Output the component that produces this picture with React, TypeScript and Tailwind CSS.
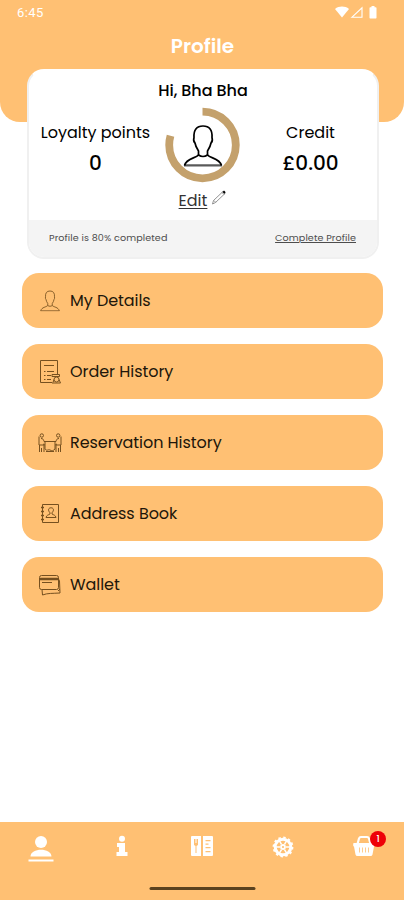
import React from 'react';

const PersonOutline = ({ className, strokeWidth = 2 }: { className?: string; strokeWidth?: number }) => (
    <svg viewBox="0 0 40 44" className={className} fill="none" stroke="currentColor" strokeWidth={strokeWidth} strokeLinejoin="round">
        <path d="M15.500 31v-4c-2-3-3-5-3.500-8-1.200-1-1.600-3.500-1-5.500C10.500 6 13.500 2 20 2s9.500 4 9 11.500c.6 2 .2 4.500-1 5.500-.5 3-1.500 5-3.500 8v4" />
        <path d="M15.500 31c-3 3.500-12 3-14 10.500M24.500 31c3 3.500 12 3 14 10.500M15.500 31c3 2 6 2 9 0" />
        <path d="M1 41.300h38" strokeWidth={strokeWidth * 1.3} strokeOpacity=".65" />
    </svg>
);

const OrderIcon = () => (
    <svg viewBox="0 0 24 26" className="h-[26px] w-6" fill="none" stroke="currentColor" strokeWidth="1">
        <path d="M14 23.500H2.500v-22h17V15" />
        <path d="M6 6.500h10M6 12.500h1.500M9 12.500h7M6 16.500h1.500M9 16.500h4M6 20.500h1.500M9 20.500h4" />
        <path d="M14 15.500h7.500v2H14zM15 23.500l1-3M14 24h8.500M21 20.500l1.500 3.500" />
        <circle cx="18.5" cy="20.500" r="2.500" />
    </svg>
);

const ReservationIcon = () => (
    <svg viewBox="0 0 24 22" className="h-[22px] w-6" fill="none" stroke="currentColor" strokeWidth="1">
        <circle cx="3.800" cy="3.500" r="1.700" />
        <circle cx="20.200" cy="3.500" r="1.700" />
        <path d="M1 4.500v8.500h5v7M1.500 13v7M3.500 20v-4M3 6.500c2 0 2.500 1 3 3h2M5 12l2 1M23 4.500v8.500h-5v7M22.500 13v7M20.500 20v-4M21 6.500c-2 0-2.500 1-3 3h-2M19 12l-2 1" />
        <path d="M7 9.500h10M7 9.500v7.500M17 9.500v7.500M7 17c2 2.500 3 0 5 1s3 1 5-1M8 19.500h8" />
    </svg>
);

const AddressIcon = () => (
    <svg viewBox="0 0 22 22" className="h-[22px] w-[22px]" fill="none" stroke="currentColor" strokeWidth="1">
        <path d="M3.500 1.500h16v18h-16z" />
        <path d="M2 4.500h3M2 8.500h3M2 12.500h3M2 16.500h3" strokeWidth="1.500" />
        <path d="M11 11V9.800C8.500 7 9.500 4.800 12 4.800s3.500 2.200 1 5V11c1.500 1 3.500 1 4 3.500H7c.5-2.500 2.500-2.500 4-3.500Z" />
    </svg>
);

const WalletIcon = () => (
    <svg viewBox="0 0 24 22" className="h-[22px] w-6" fill="none" stroke="currentColor" strokeWidth="1">
        <rect x="1.500" y="1.500" width="19" height="14" rx="2" />
        <path d="M2 5h18.500" strokeWidth="2.500" />
        <path d="M4 8.500h10M4 15.500l.5 5.500c5-2 10-1.500 17.500-2l-.5-12-1-2M20 17l2-2" />
    </svg>
);

const StatusBar = () => (
    <div className="flex h-6 items-center justify-between pl-[17px] pr-[26px] pt-0.5 text-white">
        <span className="font-['Roboto',sans-serif] text-[13px] tracking-[0.4px]">6:45</span>
        <svg viewBox="0 0 43 14" className="h-3.5 w-[43px]" fill="currentColor">
            <path d="M0 3C4-.2 10-.2 14 3L7 11.500Z" />
            <path d="M16.800 11.300 27 1.800v9.500Z" fill="none" stroke="currentColor" strokeWidth="1.100" />
            <path d="M36.500 0h3v1.200h1.200c.6 0 .8.300.8.800v9.500c0 .7-.3 1-1 1h-5c-.7 0-1-.3-1-1V2c0-.5.3-.8.800-.8h1.200Z" />
        </svg>
    </div>
);

const menuItems = [
    { label: 'My Details', icon: <PersonOutline className="h-[22px] w-5" strokeWidth={1.7} /> },
    { label: 'Order History', icon: <OrderIcon /> },
    { label: 'Reservation History', icon: <ReservationIcon /> },
    { label: 'Address Book', icon: <AddressIcon /> },
    { label: 'Wallet', icon: <WalletIcon /> },
];

function ProfileCard() {
    return (
        <section className="-mt-[53px] ml-[27px] flex h-[190px] w-[352px] flex-col overflow-hidden rounded-[17px] border-2 border-[#f0f0f0] border-t-white bg-white">
            <div className="grid h-[149px] grid-cols-[133px_minmax(0,1fr)_133px]">
                <div className="flex flex-col items-center pt-[52px]">
                    <span className="text-base leading-5 whitespace-nowrap">Loyalty points</span>
                    <span className="mt-2.5 text-xl leading-5 font-medium">0</span>
                </div>
                <div className="flex flex-col items-center pt-[10px]">
                    <span className="text-base leading-5 font-medium tracking-[-0.05px] whitespace-nowrap">Hi, Bha Bha</span>
                    <div className="mt-[6px] grid h-[76px] w-[76px] place-items-center">
                        <svg viewBox="0 0 76 76" className="col-start-1 row-start-1 h-[76px] w-[76px]" fill="none">
                            <circle cx="37.500" cy="38" r="33.300" stroke="#c4a16c" strokeWidth="7.800" pathLength="100" strokeDasharray="79.500 20.500" transform="rotate(-90 37.500 38)" />
                        </svg>
                        <PersonOutline className="col-start-1 row-start-1 mt-0.5 h-11 w-10" strokeWidth={1.7} />
                    </div>
                    <a className="mt-[8px] flex items-center gap-1 text-base leading-5 text-[#333]">
                        <span className="underline underline-offset-2">Edit</span>
                        <svg viewBox="0 0 16 16" className="-mt-1.5 h-4 w-4" fill="none" stroke="#777" strokeWidth=".8">
                            <path d="m1.500 14 1-3.500 9.500-9 2 2-9.500 9ZM11 2.500l2 2M3 10.500l1.700 1.800" />
                            <path d="m12.300 1.300 1.700 1.700" stroke="#000" strokeWidth="2" />
                        </svg>
                    </a>
                </div>
                <div className="flex flex-col items-center pt-[52px]">
                    <span className="text-base leading-5">Credit</span>
                    <span className="mt-2.5 text-xl leading-5 font-medium">£0.00</span>
                </div>
            </div>
            <div className="flex flex-1 items-center justify-between bg-[#f4f4f4] pr-[21px] pl-5 text-[9.600px] tracking-[0.1px] text-[#4d4d4d]">
                <span>Profile is 80% completed</span>
                <a className="underline">Complete Profile</a>
            </div>
        </section>
    );
}

function BottomNav() {
    return (
        <footer className="flex h-[78px] flex-col bg-[#ffc073] text-white">
            <nav className="ml-px grid h-[64px] grid-cols-5 justify-items-center pt-[13px]">
                <svg viewBox="0 0 26 28" className="h-7 w-[26px]" fill="currentColor">
                    <circle cx="13" cy="7" r="6" />
                    <path d="M2.500 21.500c0-9 21-9 21 0ZM.5 24.500h25v2H.5z" />
                </svg>
                <svg viewBox="0 0 14 22" className="h-[22px] w-3.5" fill="currentColor">
                    <circle cx="7" cy="3.700" r="3" />
                    <path d="M2 8h8v9h2.500v4h-11v-4H4v-5H2Z" />
                </svg>
                <svg viewBox="0 0 22 22" className="h-[22px] w-[22px]" fill="currentColor">
                    <path fillRule="evenodd" d="M1 1h9v20H1a1 1 0 0 1-1-1V2a1 1 0 0 1 1-1Zm2 3v6l1.500 1V18h1v-7L7 10V4H6v4h-.5V4h-1v4H4V4ZM12 1h9a1 1 0 0 1 1 1v18a1 1 0 0 1-1 1h-9Zm2.500 4v1.200h5V5Zm0 3.500v1.200h3V8.500Zm0 3.500v1.200h5V12Zm0 4v1.200h5V16Z" />
                </svg>
                <svg viewBox="0 0 22 24" className="h-6 w-[22px]" fill="none" stroke="currentColor">
                    <circle cx="11" cy="12" r="7.800" strokeWidth="3" />
                    <circle cx="11" cy="12" r="9.500" strokeWidth="1.800" strokeDasharray="2.480 2.490" />
                    <circle cx="11" cy="12" r="2" strokeWidth="1.800" />
                    <path d="M14 12h5M12.500 14.600l2.500 4.300M9.500 14.600 7 18.900M8 12H3M9.500 9.400 7 5.100M12.500 9.400 15 5.100" strokeWidth="1.500" />
                </svg>
                <div className="relative ml-px h-[22px] w-[22px]">
                    <svg viewBox="0 0 22 22" className="h-[22px] w-[22px]" fill="currentColor">
                        <path d="M4.500 9 6 3.500Q6.500 2 8 2h6q1.500 0 2 1.500L17.500 9" fill="none" stroke="currentColor" strokeWidth="2.200" />
                        <path fillRule="evenodd" d="M1 8h20c.5 0 .8.300.8.800v1.700c0 .6-.3 1-.8 1l-1.500 8q-.3 1.500-2 1.500h-13q-1.700 0-2-1.500l-1.500-8c-.5 0-.8-.4-.8-1V8.800C.2 8.300.5 8 1 8Zm5.200 4.500v5h.8v-5Zm3 0v5h.8v-5Zm3 0v5h.8v-5Zm3 0v5h.8v-5Z" />
                    </svg>
                    <span className="absolute -top-1 left-[17px] flex h-4 w-4 items-center justify-center rounded-full bg-[#ee0008] text-[9px] leading-none font-medium">1</span>
                </div>
            </nav>
            <div className="mx-auto mt-[1px] h-[3px] w-[106px] translate-x-[0.5px] rounded-full bg-[#5b421f]" />
        </footer>
    );
}

export default function App() {
    return (
        <div className="flex h-[900px] w-[404px] flex-col overflow-hidden bg-white font-['Poppins','Inter',sans-serif] text-black">
            <header className="h-[122px] shrink-0 rounded-b-[20px] bg-[#ffc073]">
                <StatusBar />
                <h1 className="mt-2 ml-px text-center text-xl leading-7 font-semibold text-white">Profile</h1>
            </header>
            <ProfileCard />
            <main className="mt-[14px] flex flex-1 flex-col gap-4 pr-[21px] pl-[22px]">
                {menuItems.map((item) => (
                    <button key={item.label} className="flex h-[55px] items-center rounded-[17px] bg-[#ffc073] pl-[15px]">
                        <span className="flex w-[26px] justify-center text-[#76501f]">{item.icon}</span>
                        <span className="ml-[7px] text-base tracking-[-0.05px] text-[#21160a]">{item.label}</span>
                    </button>
                ))}
            </main>
            <BottomNav />
        </div>
    );
}
